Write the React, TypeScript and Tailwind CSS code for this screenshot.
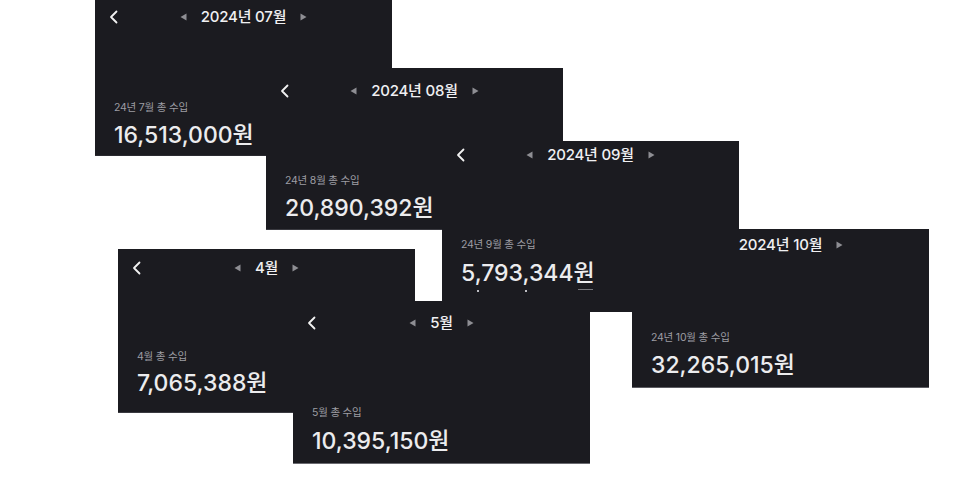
import React from "react";

type Card = {
  key: string;
  pos: string;
  title: string;
  label: string;
  amount: string;
  pt: string;
  lmt: string;
  amt: string;
  border: string;
  artifacts?: boolean;
};

const cards: Card[] = [
  { key: "oct", pos: "left-[632px] top-[229px] h-[159px] z-0", title: "2024년 10월", label: "24년 10월 총 수입", amount: "32,265,015원", pt: "pt-[6px]", lmt: "mt-[76px]", amt: "mt-[5px]", border: "border-b border-[#5c5c62]" },
  { key: "jul", pos: "left-[95px] top-[-6px] h-[162px] z-10", title: "2024년 07월", label: "24년 7월 총 수입", amount: "16,513,000원", pt: "pt-[13px]", lmt: "mt-[74px]", amt: "mt-[5px]", border: "border-b border-[#2a2a30]" },
  { key: "aug", pos: "left-[266px] top-[68px] h-[162px] z-20", title: "2024년 08월", label: "24년 8월 총 수입", amount: "20,890,392원", pt: "pt-[13px]", lmt: "mt-[73px]", amt: "mt-[5px]", border: "border-b border-[#3a3a40]" },
  { key: "sep", pos: "left-[442px] top-[141px] h-[171px] z-30", title: "2024년 09월", label: "24년 9월 총 수입", amount: "5,793,344원", pt: "pt-[4px]", lmt: "mt-[73px]", amt: "mt-[6px]", border: "", artifacts: true },
  { key: "apr", pos: "left-[118px] top-[249px] h-[164px] z-40", title: "4월", label: "4월 총 수입", amount: "7,065,388원", pt: "pt-[9px]", lmt: "mt-[72px]", amt: "mt-[4px]", border: "border-b border-[#3a3a40]" },
  { key: "may", pos: "left-[293px] top-[301px] h-[163px] z-50", title: "5월", label: "5월 총 수입", amount: "10,395,150원", pt: "pt-[12px]", lmt: "mt-[73px]", amt: "mt-[6px]", border: "border-b border-[#6a6a70]" },
];

const font = { fontFamily: '"Inter", "Noto Sans CJK KR", sans-serif' };

function Chevron() {
  return (
    <svg width="10" height="14" viewBox="0 0 10 14" fill="none">
      <path d="M7.5 1.5 L2 7 L7.5 12.5" stroke="#f2f2f2" strokeWidth="1.8" strokeLinecap="round" strokeLinejoin="round" />
    </svg>
  );
}

function Tri({ dir }: { dir: "l" | "r" }) {
  return (
    <svg width="7" height="8" viewBox="0 0 7 8">
      {dir === "l" ? <path d="M0.5 4 L6.5 0.5 L6.5 7.5 Z" fill="#8e8e93" /> : <path d="M6.5 4 L0.5 0.5 L0.5 7.5 Z" fill="#8e8e93" />}
    </svg>
  );
}

function Shot({ c }: { c: Card }) {
  return (
    <div className={`absolute w-[297px] bg-[#1b1b20] ${c.border} ${c.pos} ${c.pt} flex flex-col`}>
      <div className="grid grid-cols-[1fr_auto_1fr] items-center h-[20px]">
        <div className="pl-[14px] flex items-center">
          <Chevron />
        </div>
        <div className="flex items-center gap-[14px]">
          <Tri dir="l" />
          <span className="text-[15px] font-medium text-[#f0f0f2] leading-[20px] tracking-[-0.2px]">{c.title}</span>
          <Tri dir="r" />
        </div>
        <div />
      </div>
      <div className={`pl-[19px] ${c.lmt} text-[10.5px] leading-[14px] text-[#9d9da3] tracking-[-0.2px]`}>{c.label}</div>
      <div className={`pl-[19px] ${c.amt} text-[23px] leading-[30px] font-medium text-[#ececee] tracking-[0px]`}>{c.amount}</div>
      {c.artifacts && (
        <div className="relative h-[6px]">
          <span className="absolute left-[35px] top-[2px] w-[2px] h-[2px] bg-[#bdbdc2]" />
          <span className="absolute left-[83px] top-[2px] w-[2px] h-[2px] bg-[#bdbdc2]" />
          <span className="absolute left-[136px] top-[1px] w-[15px] h-[1px] bg-[#77777c]" />
        </div>
      )}
    </div>
  );
}

export default function App() {
  return (
    <div className="relative w-[960px] h-[480px] bg-white overflow-hidden" style={font}>
      {cards.map((c) => (
        <Shot key={c.key} c={c} />
      ))}
    </div>
  );
}
